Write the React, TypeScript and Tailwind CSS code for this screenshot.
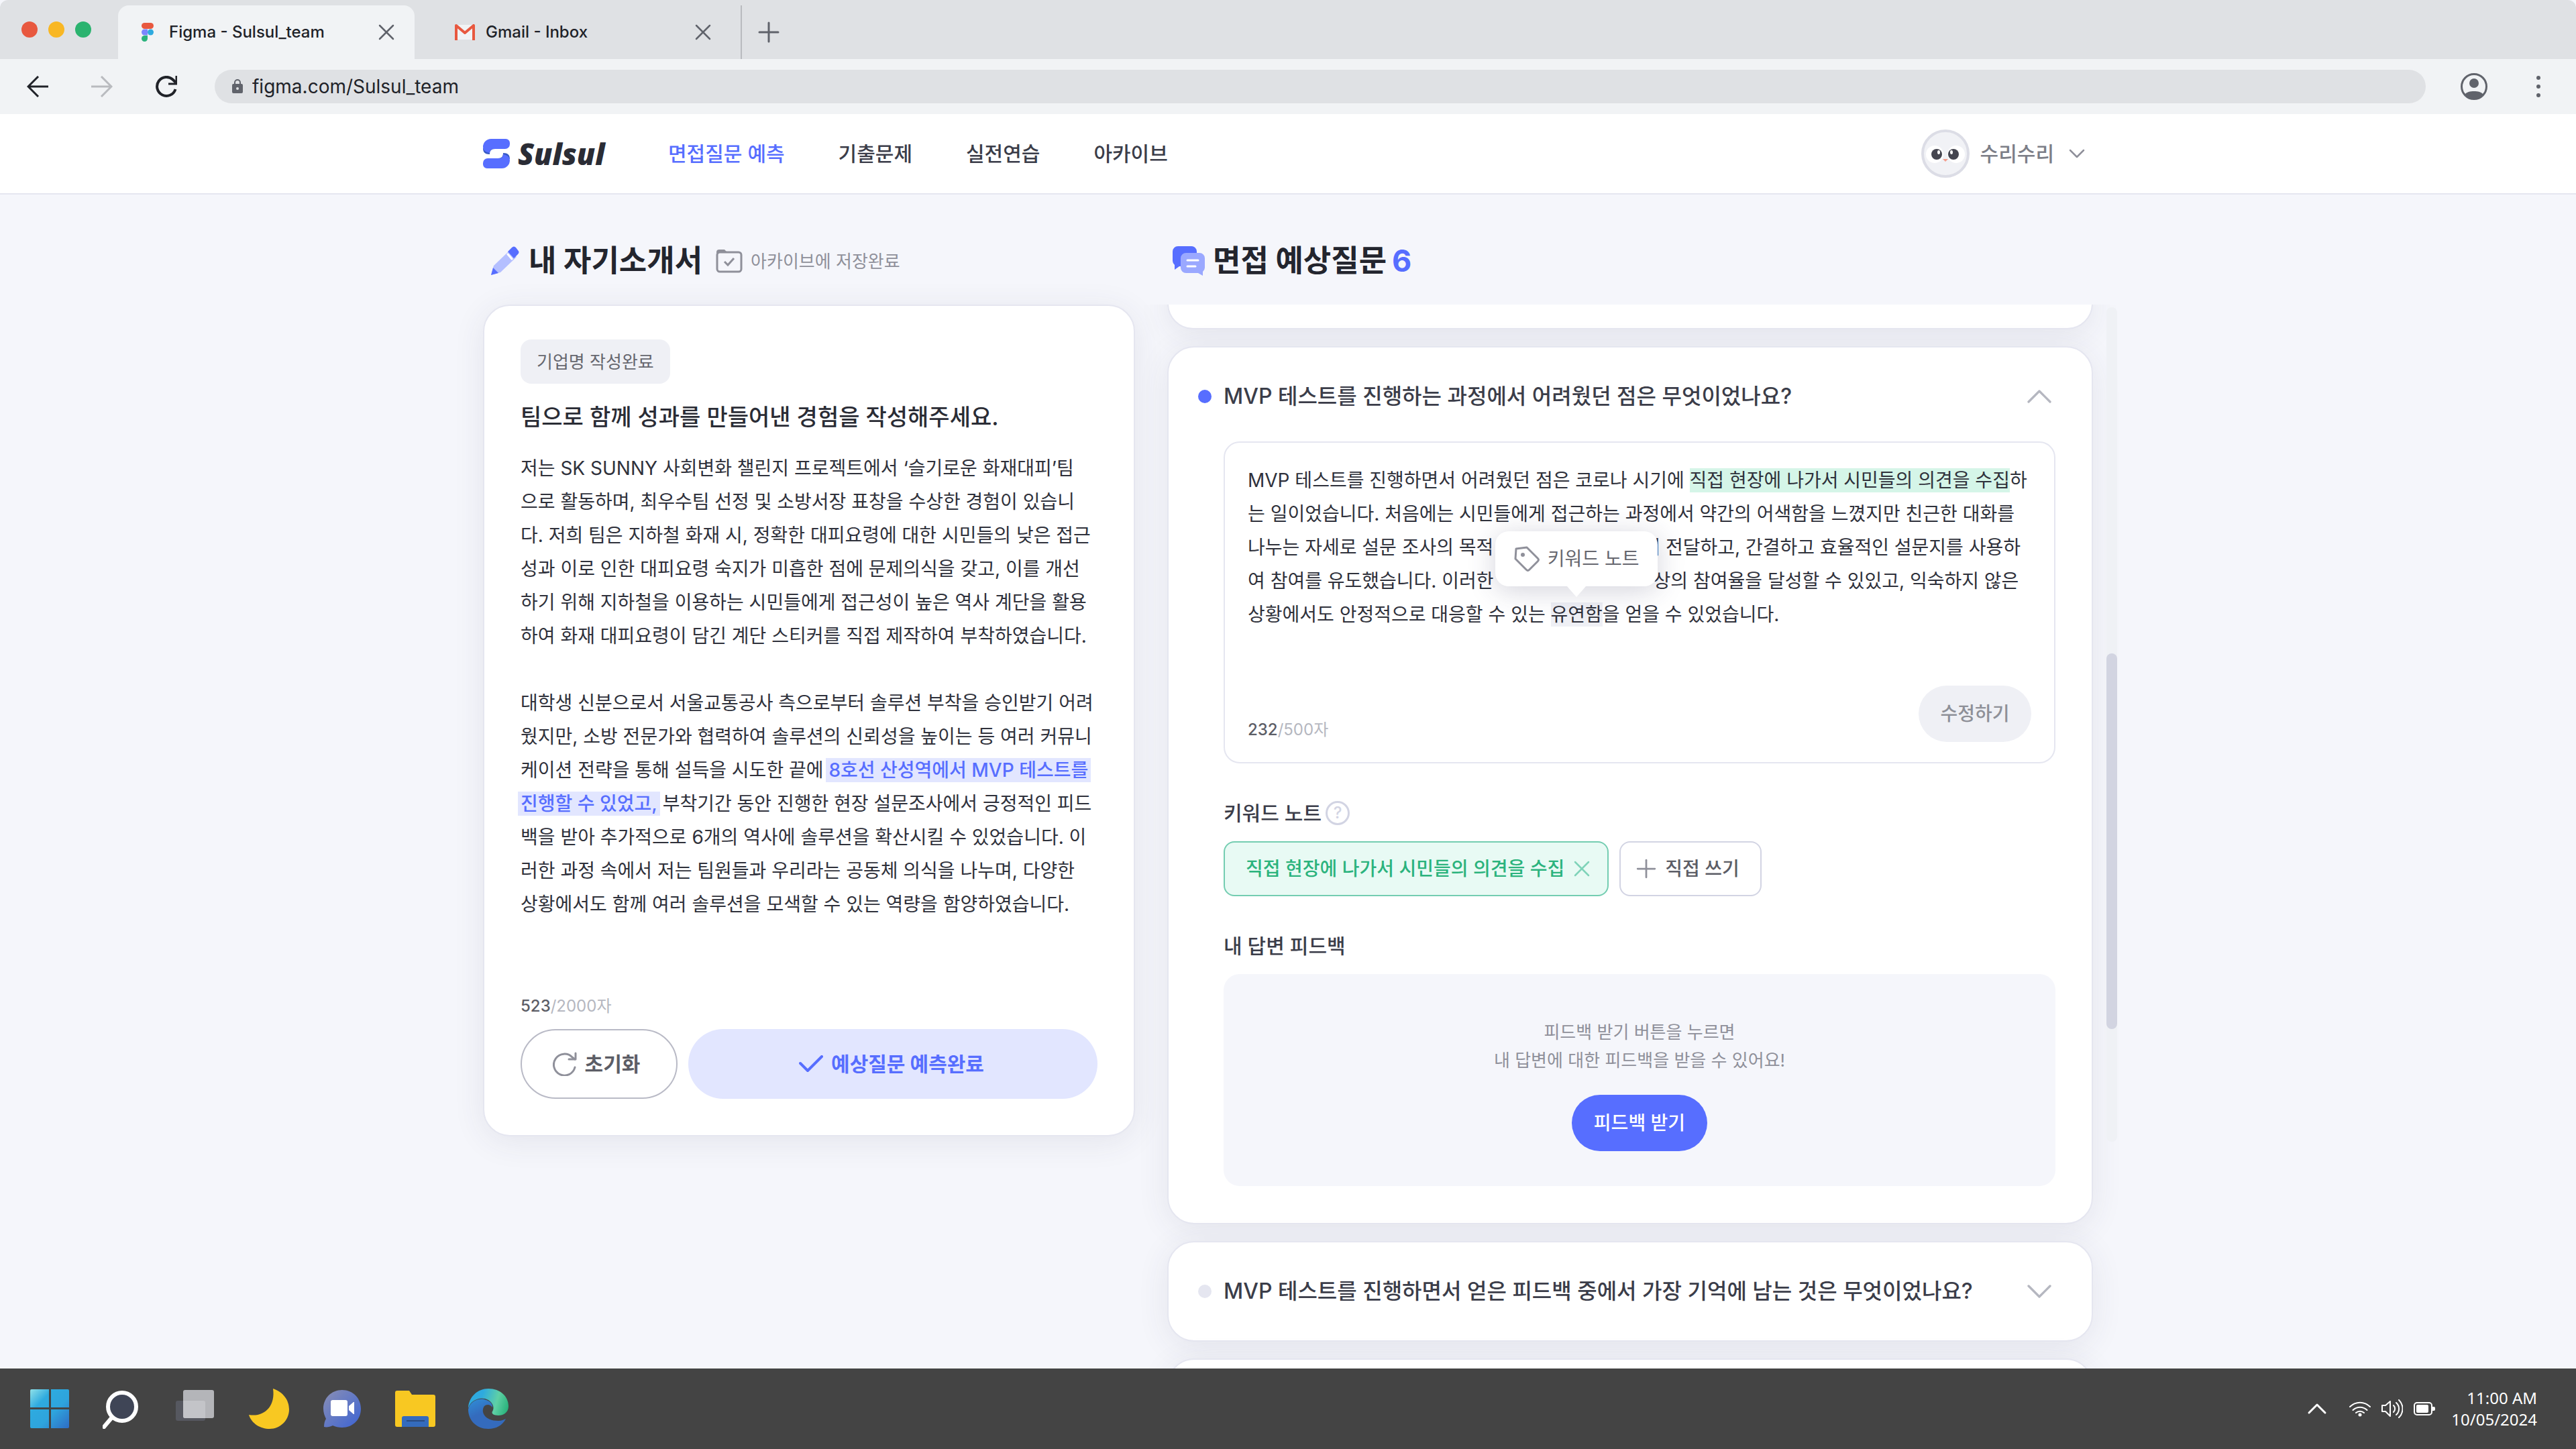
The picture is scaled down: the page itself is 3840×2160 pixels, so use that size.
import type { ReactNode } from "react";
import { ChevronDown, ChevronUp, Plus, X } from "lucide-react";

interface TabProps {
  title: string;
  icon: ReactNode;
  active?: boolean;
}

const navItems = ["면접질문 예측", "기출문제", "실전연습", "아카이브"];

const cardClass =
  "border-2 border-[#e5e6f0] bg-white shadow-[0_8px_48px_rgba(50,50,93,0.09)]";

function FigmaIcon() {
  return (
    <svg className="h-7 w-[18px]" viewBox="0 0 18 28">
      <path d="M4.5 0H9v9H4.5a4.5 4.5 0 0 1 0-9z" fill="#e8583f" />
      <path d="M9 0h4.5a4.5 4.5 0 0 1 0 9H9z" fill="#e8583f" />
      <path d="M4.5 9.500H9v9H4.500a4.500 4.500 0 0 1 0-9z" fill="#7b86ff" />
      <circle cx="13.500" cy="14" r="4.500" fill="#2eaadf" />
      <path d="M4.500 19H9v4.500A4.500 4.500 0 1 1 4.500 19z" fill="#2bb37d" />
    </svg>
  );
}

function GmailIcon() {
  return (
    <svg className="h-6 w-[30px]" viewBox="0 0 30 24">
      <rect x="1" y="1" width="28" height="22" rx="2" fill="#f1f3f5" />
      <path d="M2 24V2l13 11L28 2v22" fill="none" stroke="#e8583f" strokeWidth="4" strokeLinejoin="round" />
    </svg>
  );
}

function BrowserTab({ title, icon, active }: TabProps) {
  return (
    <div
      className={`flex h-20 items-center ${
        active ? "w-[442px] rounded-t-2xl bg-[#f1f3f5] pl-[35px] pr-[22px]" : "w-[488px] border-r-2 border-[#b9bbbf] pl-[60px] pr-9"
      }`}
    >
      {icon}
      <span className={`flex-1 text-2xl font-medium text-[#202228] ${active ? "ml-[23px]" : "ml-4"}`}>{title}</span>
      <button aria-label="탭 닫기">
        <X className="size-10 text-[#60636b]" strokeWidth={1.5} />
      </button>
    </div>
  );
}

function BrowserChrome() {
  return (
    <div className="bg-[#f5f6fb]">
      <div className="flex h-[88px] items-end rounded-t-xl bg-[#dfe1e4]">
        <div className="flex h-[88px] w-44 items-center gap-4 pl-8">
          <span className="size-6 rounded-full bg-[#e8583f]" />
          <span className="size-6 rounded-full bg-[#f8b724]" />
          <span className="size-6 rounded-full bg-[#2bb36f]" />
        </div>
        <BrowserTab title="Figma - Sulsul_team" icon={<FigmaIcon />} active />
        <BrowserTab title="Gmail - Inbox" icon={<GmailIcon />} />
        <button className="mb-4 ml-4" aria-label="새 탭">
          <Plus className="size-12 text-[#60636b]" strokeWidth={1.5} />
        </button>
      </div>
      <div className="flex h-[82px] items-center bg-[#f1f3f5] pl-10 pr-[52px]">
        <button aria-label="뒤로">
          <svg className="size-8" viewBox="0 0 32 32" fill="none" stroke="#202228" strokeWidth="3">
            <path d="M32 16H3M17 1L2 16l15 15" />
          </svg>
        </button>
        <button className="ml-16" aria-label="앞으로">
          <svg className="size-8" viewBox="0 0 32 32" fill="none" stroke="#b9bbbf" strokeWidth="3">
            <path d="M0 16h29M15 1l15 15-15 15" />
          </svg>
        </button>
        <button className="ml-16" aria-label="새로고침">
          <svg className="size-8" viewBox="0 0 32 32" fill="none" stroke="#202228" strokeWidth="4">
            <path d="M29.500 20A14 14 0 1 1 26 6l4 4" />
            <path d="M31 0v12H19" strokeWidth="3" />
          </svg>
        </button>
        <div className="ml-14 flex h-[50px] flex-1 items-center rounded-full bg-[#dfe1e4] pl-[26px]">
          <svg className="h-[22px] w-4" viewBox="0 0 16 22">
            <path d="M4 9V5a4 4 0 0 1 8 0v4" fill="none" stroke="#60636b" strokeWidth="2" />
            <rect y="7" width="16" height="14" rx="2" fill="#60636b" />
            <circle cx="8" cy="14" r="2" fill="#dfe1e4" />
          </svg>
          <input
            aria-label="주소창"
            className="ml-3.5 h-[50px] flex-1 bg-transparent text-[28px] text-[#202228] outline-none"
            defaultValue="figma.com/Sulsul_team"
          />
        </div>
        <button className="ml-13" aria-label="프로필">
          <svg className="size-10" viewBox="0 0 40 40">
            <circle cx="20" cy="20" r="18.500" fill="none" stroke="#60636b" strokeWidth="3" />
            <circle cx="20" cy="15" r="7" fill="#60636b" />
            <path d="M6 32c3-4 8-5 14-5s11 1 14 5c-3 5-8 7-14 7s-11-2-14-7z" fill="#60636b" />
          </svg>
        </button>
        <button className="ml-[72px]" aria-label="메뉴">
          <svg className="h-8 w-2" viewBox="0 0 8 32" fill="#60636b">
            <circle cx="4" cy="3" r="3" />
            <circle cx="4" cy="16" r="3" />
            <circle cx="4" cy="29" r="3" />
          </svg>
        </button>
      </div>
    </div>
  );
}

function Logo() {
  return (
    <a href="#" className="flex w-[186px] items-center gap-3">
      <svg className="h-11 w-10 shrink-0" viewBox="0 0 40 44">
        <path d="M0 14c0 6 3 9 10 9 0-5 2-8 8-8z" fill="#3558c4" />
        <path d="M40 30c0-6-3-9-10-9 0 5-2 8-8 8z" fill="#3558c4" />
        <path d="M12 0h22a6 6 0 0 1 6 6v2a7 7 0 0 1-7 7H16c-4 0-6 2-6 6-6-1-10-4-10-9A12 12 0 0 1 12 0z" fill="#576eff" />
        <path d="M28 44H6a6 6 0 0 1-6-6v-2a7 7 0 0 1 7-7h17c4 0 6-2 6-6 6 1 10 4 10 9a12 12 0 0 1-12 12z" fill="#576eff" />
      </svg>
      <span className="font-['Open_Sans',sans-serif] text-[44px] font-extrabold italic leading-[52px] text-[#2a2c35]">Sulsul</span>
    </a>
  );
}

function Avatar() {
  return (
    <svg className="size-[72px]" viewBox="0 0 72 72">
      <circle cx="36" cy="36" r="34" fill="#f1f2f6" stroke="#dcdde6" strokeWidth="4" />
      <circle cx="20" cy="37" r="13" fill="#fff" />
      <circle cx="52" cy="37" r="13" fill="#fff" />
      <circle cx="23" cy="37" r="8" fill="#44454f" />
      <circle cx="48" cy="37" r="8" fill="#44454f" />
      <ellipse cx="26" cy="34" rx="2" ry="3" fill="#fff" />
      <ellipse cx="45" cy="34" rx="2" ry="3" fill="#fff" />
      <path d="M32 44h8l-4 4z" fill="#f39c8b" />
    </svg>
  );
}

function Header() {
  return (
    <header className="border-b-2 border-[#e5e6f0] bg-white">
      <div className="mx-auto flex h-[118px] max-w-[2400px] items-center">
        <Logo />
        <nav className="ml-[90px] flex gap-20 text-[30px] font-medium">
          {navItems.map((item, i) => (
            <a key={item} href="#" className={i === 0 ? "text-[#576eff]" : "text-[#3b3d49]"}>
              {item}
            </a>
          ))}
        </nav>
        <button className="ml-auto flex items-center pr-1 text-[30px] font-medium text-[#7c7e87]">
          <Avatar />
          <span className="ml-4">수리수리</span>
          <ChevronDown className="ml-3.5 size-10 text-[#8f909a]" strokeWidth={1.5} />
        </button>
      </div>
    </header>
  );
}

function Mark({ children }: { children: ReactNode }) {
  return <mark className="-mx-1 bg-[#e2e6ff] px-1 py-px font-medium text-[#576eff]">{children}</mark>;
}

function ResumePanel() {
  return (
    <section className="w-[972px] shrink-0">
      <div className="mb-[30px] flex h-[70px] items-center pl-3">
        <svg className="h-11 w-[42px]" viewBox="0 0 42 44">
          <path d="M0 43l4-14 24-23 10 10-24 23z" fill="#b4bfff" />
          <path d="M0 43l3-11 8 8z" fill="#576eff" />
          <path d="M25 8l6-6c2-2 4-2 6 0l3 4c2 2 2 4 0 6l-6 6z" fill="#576eff" />
          <path d="M25 12l6 7" stroke="#fff" strokeWidth="3" strokeLinecap="round" />
        </svg>
        <h1 className="ml-3.5 text-[45px] font-bold text-[#23252e]">내 자기소개서</h1>
        <svg className="ml-5 h-9 w-10" viewBox="0 0 40 36" fill="none" stroke="#8f909a" strokeWidth="3">
          <path d="M1 5a4 4 0 0 1 4-4h8l5 5H1z" fill="#8f909a" stroke="none" />
          <rect x="2" y="5" width="36" height="29" rx="4" />
          <path d="M13 19l5 5 9-10" />
        </svg>
        <span className="ml-3 text-[26px] text-[#8f909a]">아카이브에 저장완료</span>
      </div>

      <article className={`${cardClass} flex flex-col items-start rounded-[40px] px-[54px] pb-[54px] pt-[50px]`}>
        <span className="flex h-[66px] items-center rounded-2xl bg-[#eff0f5] px-6 text-[26px] text-[#66676f]">기업명 작성완료</span>
        <h2 className="mt-7 whitespace-nowrap text-[34px] font-medium leading-[44px] text-[#2a2c35]">
          팀으로 함께 성과를 만들어낸 경험을 작성해주세요.
        </h2>
        <div className="mt-[29px] whitespace-nowrap text-[28px] leading-[50px] text-[#2f313b]">
          <p>
            저는 SK SUNNY 사회변화 챌린지 프로젝트에서 ‘슬기로운 화재대피’팀
            <br />
            으로 활동하며, 최우수팀 선정 및 소방서장 표창을 수상한 경험이 있습니
            <br />
            다. 저희 팀은 지하철 화재 시, 정확한 대피요령에 대한 시민들의 낮은 접근
            <br />
            성과 이로 인한 대피요령 숙지가 미흡한 점에 문제의식을 갖고, 이를 개선
            <br />
            하기 위해 지하철을 이용하는 시민들에게 접근성이 높은 역사 계단을 활용
            <br />
            하여 화재 대피요령이 담긴 계단 스티커를 직접 제작하여 부착하였습니다.
          </p>
          <p className="mt-[50px]">
            대학생 신분으로서 서울교통공사 측으로부터 솔루션 부착을 승인받기 어려
            <br />
            웠지만, 소방 전문가와 협력하여 솔루션의 신뢰성을 높이는 등 여러 커뮤니
            <br />
            케이션 전략을 통해 설득을 시도한 끝에 <Mark>8호선 산성역에서 MVP 테스트를</Mark>
            <br />
            <Mark>진행할 수 있었고,</Mark> 부착기간 동안 진행한 현장 설문조사에서 긍정적인 피드
            <br />
            백을 받아 추가적으로 6개의 역사에 솔루션을 확산시킬 수 있었습니다. 이
            <br />
            러한 과정 속에서 저는 팀원들과 우리라는 공동체 의식을 나누며, 다양한
            <br />
            상황에서도 함께 여러 솔루션을 모색할 수 있는 역량을 함양하였습니다.
          </p>
        </div>
        <p className="mt-[111px] text-2xl text-[#b5b7c0]">
          <span className="font-medium text-[#5c5d66]">523</span>/2000자
        </p>
        <div className="mt-[18px] flex w-full gap-4 text-[30px] font-bold">
          <button className="flex h-[104px] w-[234px] items-center justify-center gap-3 rounded-full border-2 border-[#b9bac6] pr-2 text-[#5c5d66]">
            <svg className="size-9" viewBox="0 0 36 36" fill="none" stroke="#8f909a" strokeWidth="3" strokeLinecap="round" strokeLinejoin="round">
              <path d="M33 23A16 16 0 1 1 29 8l4 3" />
              <path d="M34 2v9h-10" />
            </svg>
            초기화
          </button>
          <button className="flex h-[104px] flex-1 items-center justify-center gap-3 rounded-full bg-[#e2e6ff] pr-1 text-[#576eff]">
            <svg className="h-[26px] w-9" viewBox="0 0 36 26" fill="none" stroke="#576eff" strokeWidth="4" strokeLinecap="round" strokeLinejoin="round">
              <path d="M2 12l11 11L34 2" />
            </svg>
            예상질문 예측완료
          </button>
        </div>
      </article>
    </section>
  );
}

function KeywordTooltip() {
  return (
    <span className="absolute bottom-[60px] left-1/2 flex h-[82px] w-[242px] -translate-x-1/2 items-center justify-center gap-3 rounded-[20px] bg-white text-[#66676f] shadow-[0_6px_40px_rgba(50,50,93,0.22)]">
      <svg className="h-[38px] w-[38px]" viewBox="0 0 38 38" fill="none" stroke="#8f909a" strokeWidth="3" strokeLinejoin="round">
        <path d="M3 4l16-2 16 16c2 2 2 3 0 5L23 35c-2 2-3 2-5 0L2 19z" />
        <circle cx="13" cy="13" r="3" fill="#8f909a" stroke="none" />
      </svg>
      키워드 노트
      <svg className="absolute left-1/2 top-full h-4 w-7 -translate-x-1/2" viewBox="0 0 28 16">
        <path d="M0 0h28L14 16z" fill="#fff" />
      </svg>
    </span>
  );
}

function QuestionRow({ title, open }: { title: string; open?: boolean }) {
  const Chevron = open ? ChevronUp : ChevronDown;
  return (
    <button className="flex h-[50px] w-full items-center pl-11 pr-[46px] text-left" aria-expanded={!!open}>
      <span className={`size-5 rounded-full ${open ? "bg-[#576eff]" : "bg-[#e5e6f0]"}`} />
      <span className="ml-[18px] flex-1 text-[32px] font-medium text-[#3b3d49]">{title}</span>
      <Chevron className="size-16 text-[#b5b7c0]" strokeWidth={1.25} />
    </button>
  );
}

function AnswerBox() {
  return (
    <div className="flex min-h-[480px] flex-col justify-between rounded-3xl border-2 border-[#e5e6f0] px-[34px] pb-[30px] pt-[31px]">
      <p className="whitespace-nowrap text-[28px] leading-[50px] text-[#2f313b]">
        MVP 테스트를 진행하면서 어려웠던 점은 코로나 시기에{" "}
        <mark className="bg-[#d5f5e8] py-px text-inherit">직접 현장에 나가서 시민들의 의견을 수집</mark>하
        <br />
        는 일이었습니다. 처음에는 시민들에게 접근하는 과정에서 약간의 어색함을 느꼈지만 친근한 대화를
        <br />
        나누는 자세로 설문 조사의 목적
        <span className="inline-block w-[223px]" />
        히 전달하고, 간결하고 효율적인 설문지를 사용하
        <br />
        여 참여를 유도했습니다. 이러한
        <span className="inline-block w-[238px]" />
        상의 참여율을 달성할 수 있있고, 익숙하지 않은
        <br />
        상황에서도 안정적으로 대응할 수 있는{" "}
        <mark className="relative bg-[#eff0f5] py-px text-inherit">
          유연함
          <KeywordTooltip />
        </mark>
        을 얻을 수 있었습니다.
      </p>
      <div className="flex items-end justify-between">
        <p className="text-2xl leading-9 text-[#b5b7c0]">
          <span className="font-medium text-[#5c5d66]">232</span>/500자
        </p>
        <button className="h-[84px] w-[168px] rounded-full bg-[#eff0f5] text-[28px] font-medium text-[#8e9098]">수정하기</button>
      </div>
    </div>
  );
}

function QuestionPanel() {
  return (
    <section className="relative flex min-w-0 flex-1 flex-col">
      <div className="mb-[30px] flex h-[70px] items-center pl-2">
        <svg className="h-11 w-12" viewBox="0 0 48 44">
          <path d="M8 0h20a8 8 0 0 1 8 8v14a8 8 0 0 1-8 8H10l-7 5v-7a8 8 0 0 1-3-6V8a8 8 0 0 1 8-8z" fill="#576eff" />
          <path d="M20 10h20a8 8 0 0 1 8 8v14a8 8 0 0 1-3 6v6l-7-4H20a8 8 0 0 1-8-8V18a8 8 0 0 1 8-8z" fill="#9aa8ff" />
          <path d="M22 21h16M22 30h12" stroke="#fff" strokeWidth="3" strokeLinecap="round" />
        </svg>
        <h1 className="ml-3 text-[45px] font-bold text-[#23252e]">
          면접 예상질문<span className="ml-2 text-[#576eff]">6</span>
        </h1>
      </div>

      <div className="-mx-12 flex min-h-0 flex-1 flex-col gap-[25px] overflow-hidden px-12 *:shrink-0">
        <article className={`${cardClass} -mt-10 h-[77px] rounded-[40px]`} />

        <article className={`${cardClass} rounded-[40px] pb-[55px] pt-12`}>
          <QuestionRow title="MVP 테스트를 진행하는 과정에서 어려웠던 점은 무엇이었나요?" open />
          <div className="mt-[42px] pl-[82px] pr-[54px]">
            <AnswerBox />
            <h3 className="mt-[52px] flex h-11 items-center gap-1.5 text-[30px] font-medium text-[#3b3d49]">
              키워드 노트
              <button className="flex size-9 items-center justify-center rounded-full border-3 border-[#d2d4e3] text-2xl text-[#d2d4e3]" aria-label="도움말">
                ?
              </button>
            </h3>
            <div className="mt-5 flex gap-4 text-[28px] font-medium">
              <button className="flex h-[82px] items-center rounded-2xl border-2 border-[#74cdb1] bg-[#e8faf4] pl-[31px] pr-[18px] text-[#2bb37d]">
                직접 현장에 나가서 시민들의 의견을 수집
                <X className="ml-1.5 size-10 text-[#7fd3b9]" strokeWidth={1.5} />
              </button>
              <button className="flex h-[82px] items-center rounded-2xl border-2 border-[#d2d4e3] pl-4 pr-[31px] text-[#5c5d66]">
                <Plus className="mr-1.5 size-11 text-[#8f909a]" strokeWidth={1.5} />
                직접 쓰기
              </button>
            </div>
            <h3 className="mt-[52px] text-[30px] font-medium leading-[44px] text-[#3b3d49]">내 답변 피드백</h3>
            <div className="mt-5 flex flex-col items-center rounded-3xl bg-[#f5f6fb] pb-13 pt-[66px]">
              <p className="text-center text-[26px] leading-[42px] text-[#8f909a]">
                피드백 받기 버튼을 누르면
                <br />내 답변에 대한 피드백을 받을 수 있어요!
              </p>
              <button className="mt-[30px] h-[84px] w-[202px] rounded-full bg-[#576eff] text-[28px] font-medium text-white">피드백 받기</button>
            </div>
          </div>
        </article>

        <article className={`${cardClass} rounded-[40px] py-12`}>
          <QuestionRow title="MVP 테스트를 진행하면서 얻은 피드백 중에서 가장 기억에 남는 것은 무엇이었나요?" />
        </article>
        <article className={`${cardClass} h-[150px] rounded-[40px]`} />
      </div>

      {/* scrollbar beside the list */}
      <div className="absolute -right-9 top-[104px] h-[1244px] w-4 rounded-full bg-[#eff1f5] pt-[516px]">
        <div className="h-[560px] rounded-full bg-[#d2d4e1]" />
      </div>
    </section>
  );
}

function TaskbarApps() {
  return (
    <div className="flex items-center gap-[49px]">
      <button aria-label="시작">
        <svg className="size-[60px]" viewBox="0 0 60 60">
          <defs>
            <linearGradient id="win" x1="0" y1="0" x2="1" y2="1">
              <stop offset="0" stopColor="#8fe0e8" />
              <stop offset="0.3" stopColor="#2eaadf" />
              <stop offset="0.6" stopColor="#2ea4dd" />
              <stop offset="1" stopColor="#2f6cc4" />
            </linearGradient>
          </defs>
          <path d="M3 1h26v27H1V3a2 2 0 0 1 2-2zM32 1h25a2 2 0 0 1 2 2v25H32zM1 31h28v28H3a2 2 0 0 1-2-2zM32 31h27v26a2 2 0 0 1-2 2H32z" fill="url(#win)" />
        </svg>
      </button>
      <button aria-label="검색">
        <svg className="size-[60px]" viewBox="0 0 60 60" fill="none" stroke="#fff" strokeLinecap="round">
          <circle cx="29" cy="27" r="21" fill="#3f4556" strokeWidth="6" />
          <path d="M13 44L2 57" strokeWidth="6" />
        </svg>
      </button>
      <button aria-label="작업 보기">
        <svg className="size-[60px]" viewBox="0 0 60 60">
          <rect x="0" y="18" width="44" height="30" rx="3" fill="#565860" />
          <rect x="11" y="2" width="46" height="42" rx="3" fill="#b4b5b9" />
          <path d="M11 18h30a3 3 0 0 1 3 3v23H14a3 3 0 0 1-3-3z" fill="#c3c4c8" />
        </svg>
      </button>
      <button aria-label="야간 모드">
        <svg className="size-[60px]" viewBox="0 0 60 60">
          <path d="M36 0c15 5 24 17 24 31 0 16-13 29-29 29C17 60 4 52 0 39c22 4 40-12 36-39z" fill="#f8c822" />
        </svg>
      </button>
      <button aria-label="채팅">
        <svg className="size-[60px]" viewBox="0 0 60 60">
          <defs>
            <linearGradient id="chat" x1="0" y1="0" x2="1" y2="1">
              <stop offset="0" stopColor="#8a8fb4" />
              <stop offset="1" stopColor="#3c63d4" />
            </linearGradient>
          </defs>
          <path d="M30 2c16 0 28 12 28 28S46 58 30 58c-5 0-10-1-14-3-4 2-9 3-13 2 0-5 1-9 3-12-2-4-4-9-4-15C2 14 14 2 30 2z" fill="url(#chat)" />
          <rect x="13" y="17" width="25" height="24" rx="3" fill="#fff" />
          <path d="M40 26l7-6h1v18h-1l-7-6z" fill="#fff" />
        </svg>
      </button>
      <button aria-label="파일 탐색기">
        <svg className="size-[60px]" viewBox="0 0 60 60">
          <path d="M3 3h18l4 6h32a3 3 0 0 1 3 3v42a3 3 0 0 1-3 3H3a3 3 0 0 1-3-3V6a3 3 0 0 1 3-3z" fill="#f8c822" />
          <path d="M10 57V44a3 3 0 0 1 3-3h34a3 3 0 0 1 3 3v13z" fill="#346bbd" />
          <path d="M17 48h27" stroke="#2a4a80" strokeWidth="2" />
        </svg>
      </button>
      <button aria-label="브라우저">
        <svg className="size-[60px]" viewBox="0 0 60 60">
          <defs>
            <linearGradient id="edge" x1="0" y1="0.4" x2="1" y2="0.6">
              <stop offset="0.3" stopColor="#2eaadf" />
              <stop offset="0.7" stopColor="#5fd0a5" />
              <stop offset="1" stopColor="#2bb37d" />
            </linearGradient>
            <linearGradient id="edgeBlue" x1="0" y1="0" x2="0.6" y2="1">
              <stop offset="0" stopColor="#2f8fd8" />
              <stop offset="0.5" stopColor="#346bbd" />
            </linearGradient>
          </defs>
          <path d="M56 45c-5 10-15 15-26 15C12 60 0 47 0 31c2-11 14-17 24-15 9 2 13 8 12 12-3-5-9-5-12-2-6 8 0 22 21 22 5 0 8-2 11-3z" fill="url(#edgeBlue)" />
          <path d="M0 29C1 12 14 0 30 0c18 0 30 12 30 26 0 10-8 14-15 14s-11-3-9-6c3-4 2-12-6-17-10-6-26-1-30 12z" fill="url(#edge)" />
        </svg>
      </button>
    </div>
  );
}

function Taskbar() {
  return (
    <footer className="flex h-[120px] shrink-0 items-center justify-between bg-[#444] pl-11 pr-[58px] text-white">
      <TaskbarApps />
      <div className="flex items-center">
        <ChevronUp className="mr-6 size-12" strokeWidth={1.5} />
        <svg className="h-6 w-8" viewBox="0 0 32 24" fill="none" stroke="#fff" strokeWidth="2" strokeLinecap="round">
          <path d="M1 9a21 21 0 0 1 30 0M5.500 14a15 15 0 0 1 21 0M10 18a9 9 0 0 1 12 0" />
          <circle cx="16" cy="21" r="2.500" fill="#fff" stroke="none" />
        </svg>
        <svg className="ml-4 h-7 w-8" viewBox="0 0 32 28" fill="none" stroke="#fff" strokeWidth="2" strokeLinecap="round" strokeLinejoin="round">
          <path d="M1 9v9h5l7 7V3L6 9zM18 9a7 7 0 0 1 0 10M22 5a12 12 0 0 1 0 18M26 1a18 18 0 0 1 0 26" />
        </svg>
        <svg className="ml-4 h-5 w-8" viewBox="0 0 32 20">
          <rect x="1" y="1" width="26" height="18" rx="4" fill="none" stroke="#fff" strokeWidth="2" />
          <rect x="4" y="4" width="18" height="12" rx="2" fill="#fff" />
          <path d="M28 7h2a2 2 0 0 1 2 2v2a2 2 0 0 1-2 2h-2z" fill="#fff" />
        </svg>
        <p className="ml-6 text-right font-['Noto_Sans',sans-serif] text-2xl">
          11:00 AM
          <br />
          10/05/2024
        </p>
      </div>
    </footer>
  );
}

export default function App() {
  return (
    <div className="flex h-screen flex-col overflow-hidden bg-[#f5f6fb] font-['Inter','Noto_Sans_CJK_KR',sans-serif]">
      <BrowserChrome />
      <Header />
      <main className="flex min-h-0 w-full flex-1">
        <div className="mx-auto flex w-full max-w-[2400px] gap-12 pt-16">
          <ResumePanel />
          <QuestionPanel />
        </div>
      </main>
      <Taskbar />
    </div>
  );
}
